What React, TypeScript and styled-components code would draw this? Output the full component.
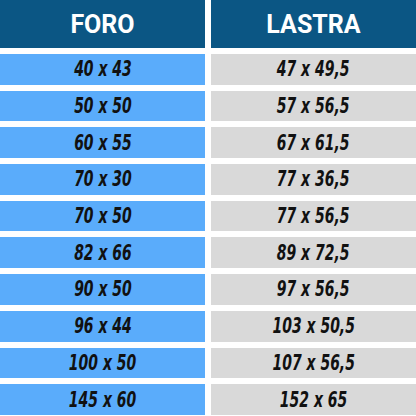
import React from "react";
import styled, { createGlobalStyle } from "styled-components";

const rows: [string, string][] = [
  ["40 x 43", "47 x 49,5"],
  ["50 x 50", "57 x 56,5"],
  ["60 x 55", "67 x 61,5"],
  ["70 x 30", "77 x 36,5"],
  ["70 x 50", "77 x 56,5"],
  ["82 x 66", "89 x 72,5"],
  ["90 x 50", "97 x 56,5"],
  ["96 x 44", "103 x 50,5"],
  ["100 x 50", "107 x 56,5"],
  ["145 x 60", "152 x 65"],
];

const App = () => {
  return (
    <>
      <GlobalStyle />
      <Table>
        <HeadCell>FORO</HeadCell>
        <HeadCell>LASTRA</HeadCell>
        {rows.map(([foro, lastra]) => (
          <React.Fragment key={foro}>
            <Cell tone="blue">
              <Value>{foro}</Value>
            </Cell>
            <Cell tone="gray">
              <Value>{lastra}</Value>
            </Cell>
          </React.Fragment>
        ))}
      </Table>
    </>
  );
};

const GlobalStyle = createGlobalStyle`
  body {
    margin: 0;
    background: #ffffff;
  }
`;
const Table = styled.div`
  width: 416px;
  height: 416px;
  display: grid;
  grid-template-columns: 205px 205px;
  grid-template-rows: 48px repeat(10, 30.7px);
  gap: 6px;
  align-content: start;
`;
const HeadCell = styled.div`
  background: #0b5684;
  color: #ffffff;
  font-family: Roboto, "Liberation Sans", sans-serif;
  font-weight: 700;
  font-size: 25px;
  display: flex;
  align-items: center;
  justify-content: center;
`;
const Cell = styled.div<{ tone: "blue" | "gray" }>`
  background: ${(p) => (p.tone === "blue" ? "#5aacfb" : "#d9d9d9")};
  display: flex;
  align-items: center;
  justify-content: center;
  overflow: hidden;
`;
const Value = styled.span`
  display: inline-block;
  font-family: "DejaVu Sans Condensed", "DejaVu Sans", sans-serif;
  font-stretch: condensed;
  font-weight: 700;
  font-style: italic;
  font-size: 21px;
  color: #111111;
  white-space: pre;
  transform: scaleX(0.74);
`;

export default App;
